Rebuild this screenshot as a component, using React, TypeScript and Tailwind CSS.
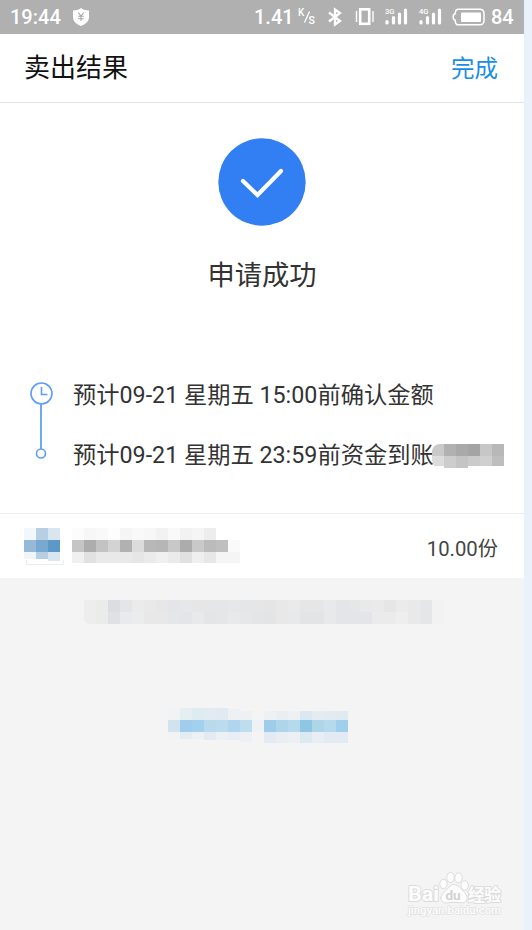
import React from 'react';

const font = "font-['Roboto','Noto_Sans_CJK_SC',sans-serif]";

interface Cells {
  x: number;
  y: number;
  h: number;
  colors: string[];
}

interface MosaicProps {
  width: number;
  height: number;
  rows: Cells[];
  className?: string;
}

// Pixelated block that hides private details, every cell is 12px wide
const Mosaic: React.FC<MosaicProps> = ({ width, height, rows, className }) => (
  <svg
    width={width}
    height={height}
    viewBox={`0 0 ${width} ${height}`}
    shapeRendering="crispEdges"
    className={`shrink-0 ${className ?? ''}`}
  >
    {rows.map((row) =>
      row.colors.map((c, i) => (
        <rect key={`${row.y}-${row.x}-${i}`} x={row.x + i * 12} y={row.y} width={12} height={row.h} fill={c} />
      ))
    )}
  </svg>
);

const accountRows: Cells[] = [
  { x: 0, y: 0, h: 12, colors: ['#c9c9c9', '#b1b1b1', '#a9a9a9', '#a4a4a4', '#c7c7c7', '#b8b8b8'] },
  { x: 0, y: 12, h: 10, colors: ['#dcdcdc', '#cdcdcd', '#c4c4c4', '#cbcbcb', '#d0d0d0', '#bebebe'] },
  { x: 12, y: 22, h: 2, colors: ['#cdcdcd', '#c4c4c4'] },
];

const logoRows: Cells[] = [
  { x: 0, y: 0, h: 12, colors: ['#f2f7fb', '#b6cfe3', '#d8e6ef'] },
  { x: 0, y: 12, h: 12, colors: ['#95bad8', '#78aacf', '#5c99c6'] },
  { x: 0, y: 24, h: 7, colors: ['#f0f5fa', '#b5d0e4', '#d8e6ef'] },
  { x: 24, y: 31, h: 2, colors: ['#d8e6ef'] },
];

const nameRows: Cells[] = [
  {
    x: 0, y: 0, h: 12,
    colors: ['#fcfcfc', '#f7f7f7', '#f9f9f9', '#fdfdfd', '#f5f5f5', '#f9f9f9', '#f7f7f7', '#f2f2f2', '#f9f9f9', '#f2f2f2', '#f5f5f5', '#ededed'],
  },
  {
    x: 0, y: 12, h: 12,
    colors: ['#c5c5c5', '#adadad', '#c3c3c3', '#d3d3d3', '#b1b1b1', '#dcdcdc', '#b8b8b8', '#b6b6b6', '#c8c8c8', '#acacac', '#c9c9c9', '#bbbbbb', '#bfbfbf', '#fafafa'],
  },
  {
    x: 0, y: 24, h: 11,
    colors: ['#f0f0f0', '#e1e1e1', '#e9e9e9', '#e9e9e9', '#e9e9e9', '#e6e6e6', '#ebebeb', '#f0f0f0', '#ebebeb', '#e1e1e1', '#efefef', '#e7e7e7', '#f5f5f5', '#f5f5f5'],
  },
];

const noticeRows: Cells[] = [
  {
    x: 0, y: 0, h: 12,
    colors: ['#ededed', '#eaecea', '#dcdde0', '#e3e5e8', '#ebebeb', '#e9e9e9', '#e7e7e7', '#e3e5e8', '#e5e7e9', '#e6e6e6', '#e5e6e8', '#e5e6e8', '#e6e7e9', '#e5e6e8', '#e6e6e6', '#e3e5e7', '#e8e8e8', '#eaeaea', '#e6e6e6', '#e4e6e8', '#e7e9ec', '#e3e5e8', '#e4e6e8', '#e8eae9', '#eaeaea', '#e6e6e6', '#ebebeb', '#e8e9eb', '#e4e6e8', '#f2f2f2'],
  },
  {
    x: 0, y: 12, h: 12,
    colors: ['#ededed', '#e9ecea', '#e0e1e3', '#e8eaed', '#ebedec', '#e8e8e8', '#e8e8e8', '#e4e6e8', '#e3e5e8', '#e7e9eb', '#e4e5e7', '#e5e6e8', '#e7e9eb', '#e5e7e9', '#e3e5e8', '#e2e4e6', '#e8e8e8', '#e7e9eb', '#e2e4e6', '#e2e4e6', '#e7e9eb', '#e3e5e8', '#e3e5e8', '#e3e5e8', '#ebebeb', '#ebebeb', '#eeeeee', '#e9e9e9', '#e4e6e8', '#f2f2f2'],
  },
];

const linkLeftRows: Cells[] = [
  { x: 0, y: 0, h: 12, colors: ['#f2f3f4', '#e5eef0', '#deebf0', '#e2ebf1', '#e1eaf2'] },
  { x: 60, y: 1, h: 11, colors: ['#edf1f4'] },
  { x: 72, y: 3, h: 9, colors: ['#eef1f4'] },
  { x: 0, y: 12, h: 12, colors: ['#d1e4ee', '#9fcdeb', '#a4d0ef', '#b9daec', '#bbdbee', '#b0d5ee', '#c0dcef', '#eef2f5'] },
  { x: 0, y: 24, h: 7, colors: ['#f1f3f5', '#e4ecf3', '#ecf1f4', '#e3eaf2', '#edf1f4', '#e8eef3', '#edf1f4'] },
  { x: 36, y: 31, h: 1, colors: ['#e3eaf2', '#edf1f4', '#e8eef3', '#edf1f4'] },
  { x: 72, y: 32, h: 2, colors: ['#edf1f4'] },
];

const linkRightRows: Cells[] = [
  { x: 0, y: 3, h: 9, colors: ['#edf1f4', '#e8eef2', '#edf1f4', '#dce8f1', '#e4ecf2', '#e3ebf2', '#dfebf1'] },
  { x: 0, y: 12, h: 12, colors: ['#9fccea', '#afd5ea', '#b5d9ed', '#8fc6e4', '#aed6e9', '#b5d9ed', '#a0ceed'] },
  { x: 0, y: 24, h: 11, colors: ['#e2ebf3', '#e8eef2', '#eaf0f3', '#dbe9f1', '#e8eef4', '#e2eaf3', '#e2eaf3'] },
];

const ShieldIcon = () => (
  <svg width="18" height="20" viewBox="0 0 18 20">
    <path d="M9 1C6.5 2.8 4 3.4 1 3.5V10c0 4.500 3.500 7.300 8 9 4.500-1.700 8-4.500 8-9V3.500C14 3.400 11.500 2.800 9 1Z" fill="#fff" />
    <path d="M6.200 5.500 9 9l2.800-3.500M9 9v5M6.200 9.300h5.600M6.200 11.700h5.600" fill="none" stroke="#a8a8a8" strokeWidth="1.100" />
  </svg>
);

const BluetoothIcon = () => (
  <svg width="14" height="20" viewBox="0 0 14 20" fill="none" stroke="#fff" strokeWidth="2.300">
    <path d="M1 5.500 12 14 7 17.500V2.500L12 6 1 14.500" />
  </svg>
);

const VibrateIcon = () => (
  <svg width="20" height="20" viewBox="0 0 20 20" fill="none" stroke="#fff">
    <rect x="5.200" y="2.300" width="9" height="14.500" strokeWidth="2.600" />
    <path d="M1.500 4v11M18 4v11" strokeWidth="1.400" />
  </svg>
);

const Signal: React.FC<{ label: string }> = ({ label }) => (
  <svg width="24" height="20" viewBox="0 0 24 20">
    <text x="0" y="7" fill="#fff" fontSize="7.500" fontWeight="500" className={font}>{label}</text>
    <g stroke="#fff" strokeWidth="3.200" strokeLinecap="round">
      <path d="M2 14.500v1.500M8.500 10.500V16M14.500 7v9M20.500 3v13" />
    </g>
  </svg>
);

const BatteryIcon = () => (
  <svg width="34" height="18" viewBox="0 0 34 18">
    <path d="M6 1.200h22a4 4 0 0 1 4 4v7.600a4 4 0 0 1-4 4H6q-2 0-2.500-2.500L3 12Q1.200 12 1.200 9T3 6l.5-2.300Q4 1.200 6 1.200Z" fill="none" stroke="#fff" strokeWidth="1.500" />
    <rect x="9" y="4.500" width="20" height="9.500" rx="1" fill="#fff" />
  </svg>
);

const StatusBar = () => (
  <div className="flex h-[34px] shrink-0 items-center bg-[#b0b0b0] pl-[10px] text-[20px] font-medium leading-none text-white">
    <span className="w-[62px] whitespace-nowrap">19:44</span>
    <ShieldIcon />
    <span className="ml-[164px] w-[44px] whitespace-nowrap">1.41</span>
    <svg width="20" height="20" viewBox="0 0 20 20" className={font} fill="#fff">
      <text x="0" y="8.500" fontSize="10">K</text>
      <path d="M6.500 15.500 11.500 4.500" stroke="#fff" strokeWidth="1.300" />
      <text x="10.500" y="16.500" fontSize="10.500">S</text>
    </svg>
    <span className="ml-[10px]"><BluetoothIcon /></span>
    <span className="ml-[13px]"><VibrateIcon /></span>
    <span className="ml-[10px]"><Signal label="3G" /></span>
    <span className="ml-[10px]"><Signal label="4G" /></span>
    <span className="ml-[9px]"><BatteryIcon /></span>
    <span className="ml-[5px]">84</span>
  </div>
);

const Watermark = () => (
  <svg width="100" height="50" viewBox="0 0 100 50" className={font} fill="#fcfcfc" stroke="#dcdcdc" strokeWidth="1">
    <g paintOrder="stroke" strokeWidth="2" strokeLinejoin="round">
      <text x="2" y="30" fontSize="21" fontWeight="700" textLength="31" lengthAdjust="spacingAndGlyphs">Bai</text>
      <text x="62" y="29.500" fontSize="17" fontWeight="700" textLength="33">经验</text>
    </g>
    <ellipse cx="37.500" cy="13" rx="3.700" ry="4.700" />
    <ellipse cx="44.500" cy="6.500" rx="3.800" ry="5" />
    <ellipse cx="52.500" cy="6.800" rx="3.800" ry="5" />
    <ellipse cx="58.700" cy="14.500" rx="3.700" ry="4.700" />
    <path d="M48 13.500c-4.500 0-5.500 4-8.500 6.500-4 3.200-5.500 6.500-4 9.500 1.300 2.600 4 2.800 6.500 2.300 4-.7 8-.7 12 0 3 .5 5.800-.2 6.800-2.800 1.200-3.300-.8-6.500-4.300-9.500-2.800-2.500-4-6-8.500-6Z" />
    <text x="39.500" y="28.500" fontSize="13.500" fontWeight="700" fill="#d2d2d2" stroke="none">du</text>
    <text x="2" y="43" fontSize="10.500" fontWeight="500" textLength="93" fill="#fbfbfb" stroke="#e4e4e4" strokeWidth="1.500" paintOrder="stroke" lengthAdjust="spacingAndGlyphs">jingyan.baidu.com</text>
  </svg>
);

export default function App() {
  return (
    <div className={`flex h-[930px] w-[532px] overflow-hidden bg-[#ebf1fa] ${font}`}>
      <div className="flex w-[524px] flex-col bg-[#f4f4f4]">
        <StatusBar />

        {/* Title bar */}
        <header className="flex h-[69px] shrink-0 items-center justify-between border-b border-[#e3e3e3] bg-white pl-6 pr-[26px]">
          <h1 className="text-[26px] leading-none text-[#111]">卖出结果</h1>
          <button className="pt-[4px] text-[23.5px] leading-none text-[#1a8ee6]">完成</button>
        </header>

        <main className="flex h-[411px] shrink-0 flex-col border-b border-[#ededed] bg-white">
          <div className="flex flex-col items-center pt-[35px]">
            <svg width="88" height="88" viewBox="0 0 88 88">
              <circle cx="44" cy="44" r="43.700" fill="#317ff3" />
              <path d="M25 43 39.500 57 63 33" fill="none" stroke="#fff" strokeWidth="4.200" strokeLinecap="round" />
            </svg>
            <h2 className="mt-[36px] text-[27.3px] leading-[28px] text-[#333]">申请成功</h2>
          </div>

          {/* Progress steps */}
          <div className="mt-[75px] flex pl-[29px]">
            <svg width="24" height="100" viewBox="0 0 24 100" fill="none" stroke="#5f9df8" strokeWidth="1.600" className="mt-[15px]">
              <circle cx="12.500" cy="13.500" r="10.500" />
              <path d="M12.500 7v7.500h6" />
              <path d="M12 24v45" strokeWidth="1.800" />
              <circle cx="12" cy="73.500" r="4.500" />
            </svg>
            <div className="ml-5 flex flex-col whitespace-nowrap text-[23.25px] text-[#333]">
              <p className="flex h-[60px] items-center">预计09-21 星期五 15:00前确认金额</p>
              <div className="flex h-[60px] items-center">
                <p className="w-[359px]">预计09-21 星期五 23:59前资金到账</p>
                <Mosaic width={72} height={24} rows={accountRows} className="mt-[2px] rounded-l-lg" />
              </div>
            </div>
          </div>
        </main>

        {/* Fund row */}
        <section className="flex h-[64px] shrink-0 items-start bg-white pl-6 pr-[26px] pt-[14px]">
          <div className="w-[40px] shrink-0">
            <Mosaic width={36} height={33} rows={logoRows} />
            <div className="-mt-px ml-[2px] h-[5px] w-[38px] border border-t-0 border-[#ececf0]" />
          </div>
          <Mosaic width={168} height={35} rows={nameRows} className="ml-2" />
          <span className="ml-auto mt-[11px] text-[20.3px] leading-5 text-[#444]">10.00份</span>
        </section>

        <div className="flex flex-col items-center pt-[22px]">
          <Mosaic width={360} height={24} rows={noticeRows} className="ml-[4px] rounded-bl-md" />
        </div>

        <div className="flex pl-[168px] pt-[84px]">
          <Mosaic width={96} height={35} rows={linkLeftRows} />
          <Mosaic width={84} height={35} rows={linkRightRows} />
        </div>

        <div className="mt-auto flex justify-end pb-[9px] pr-[18px]">
          <Watermark />
        </div>
      </div>
    </div>
  );
}
